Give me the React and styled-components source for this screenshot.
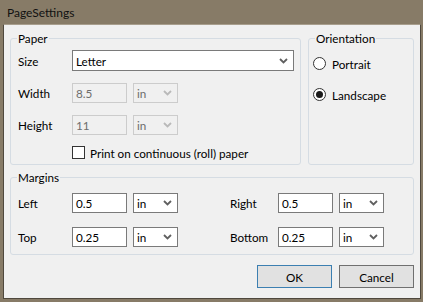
import React from 'react'
import styled, { createGlobalStyle } from 'styled-components'

const GlobalStyle = createGlobalStyle`
  html, body { margin: 0; padding: 0; background: #ffffff; }
  body { font-family: Lato, "Liberation Sans", Arial, sans-serif; font-size: 11.7px; color: #000; }
  * { box-sizing: border-box; }
`

const Window = styled.div`
  width: 423px;
  height: 302px;
  background: #877b67;
  display: flex;
  flex-direction: column;
`

const TitleBar = styled.div`
  height: 24px;
  padding-left: 7px;
  display: flex;
  align-items: center;
  font-size: 12px;
  color: #111;
`

const Body = styled.div`
  flex: 1;
  margin: 0 2px 3px 3px;
  border: 1px solid #4f483d;
  border-top-color: #a89e8d;
  background: #f0f0f0;
  padding: 6px 6px 0 6px;
  display: flex;
  flex-direction: column;
`

const TopRow = styled.div`
  display: flex;
  gap: 7px;
  height: 134px;
`

const Group = styled.fieldset`
  margin: 0;
  width: ${p => p.$w}px;
  height: ${p => p.$h}px;
  border: 1px solid #d5dce3;
  border-radius: 3px;
  padding: ${p => p.$pt}px 0 0 ${p => p.$pl}px;
  min-width: 0;
`

const Legend = styled.legend`
  padding: 0 1px;
  margin-left: ${p => p.$ml || -1}px;
  height: 14px;
  line-height: 14px;
  color: #000;
`

const FormGrid = styled.div`
  display: grid;
  grid-template-columns: ${p => p.$cols};
  grid-auto-rows: 21px;
  column-gap: 6px;
  row-gap: ${p => p.$gap}px;
  align-items: center;
`

const Label = styled.span`
  white-space: nowrap;
  grid-column-start: ${p => p.$col || 'auto'};
`

const TextBox = styled.div`
  height: ${p => p.$h || 20}px;
  border: 1px solid ${p => (p.$disabled ? '#cccccc' : '#7a7a7a')};
  background: ${p => (p.$disabled ? '#f0f0f0' : '#ffffff')};
  color: ${p => (p.$disabled ? '#6d6d6d' : '#000')};
  padding-left: 3px;
  display: flex;
  align-items: center;
  grid-column: span ${p => p.$span || 1};
`

const Combo = styled(TextBox)`
  justify-content: space-between;
  padding-right: 5px;
`

const CheckRow = styled.label`
  grid-column: 2 / span 3;
  align-self: start;
  height: 13px;
  display: flex;
  align-items: center;
  gap: 5px;
  white-space: nowrap;
`

const CheckBox = styled.span`
  width: 13px;
  height: 13px;
  border: 1px solid #333;
  background: #fff;
`

const RadioList = styled.div`
  display: flex;
  flex-direction: column;
  gap: 18px;
`

const RadioRow = styled.label`
  display: flex;
  align-items: center;
  gap: 6px;
  height: 13px;
`

const Radio = styled.span`
  width: 13px;
  height: 13px;
  border-radius: 50%;
  border: 1px solid #333;
  background: #fff;
  display: flex;
  align-items: center;
  justify-content: center;
  &::after {
    content: '';
    width: 7px;
    height: 7px;
    border-radius: 50%;
    background: ${p => (p.$checked ? '#1a1a1a' : 'transparent')};
  }
`

const Buttons = styled.div`
  display: flex;
  justify-content: flex-end;
  gap: 7px;
  margin-top: 10px;
`

const Button = styled.button`
  width: 75px;
  height: 23px;
  font: inherit;
  color: #000;
  background: #e1e1e1;
  border: 1px solid ${p => (p.$default ? '#3c7fb1' : '#707070')};
  padding: 0;
`

function Chevron({ disabled }) {
  return (
    <svg width="9" height="6" viewBox="0 0 9 6">
      <path d="M1 1 L4.5 4.5 L8 1" fill="none" stroke={disabled ? '#b9b9b9' : '#606060'} strokeWidth="1.8" />
    </svg>
  )
}

function Select({ value, span, disabled, h }) {
  return (
    <Combo $span={span} $disabled={disabled} $h={h}>
      <span>{value}</span>
      <Chevron disabled={disabled} />
    </Combo>
  )
}

export default function App() {
  return (
    <>
      <GlobalStyle />
      <Window>
        <TitleBar>PageSettings</TitleBar>
        <Body>
          <TopRow>
            <Group $w={291} $h={134} $pt={5} $pl={7}>
              <Legend>Paper</Legend>
              <FormGrid $gap={11} $cols="48px 55px 45px 110px">
                <Label $col={1}>Size</Label>
                <Select value="Letter" span={3} h={21} />
                <Label $col={1}>Width</Label>
                <TextBox $disabled>8.5</TextBox>
                <Select value="in" disabled />
                <Label $col={1}>Height</Label>
                <TextBox $disabled>11</TextBox>
                <Select value="in" disabled />
                <CheckRow>
                  <CheckBox />
                  Print on continuous (roll) paper
                </CheckRow>
              </FormGrid>
            </Group>
            <Group $w={106} $h={134} $pt={12} $pl={4}>
              <Legend $ml={2}>Orientation</Legend>
              <RadioList>
                <RadioRow>
                  <Radio />
                  Portrait
                </RadioRow>
                <RadioRow>
                  <Radio $checked />
                  Landscape
                </RadioRow>
              </RadioList>
            </Group>
          </TopRow>
          <Group $w={404} $h={85} $pt={8} $pl={7} style={{ marginTop: 5 }}>
            <Legend>Margins</Legend>
            <FormGrid $gap={13} $cols="48px 55px 45px 40px 42px 55px 45px">
              <Label>Left</Label>
              <TextBox>0.5</TextBox>
              <Select value="in" />
              <Label $col={5}>Right</Label>
              <TextBox>0.5</TextBox>
              <Select value="in" />
              <Label $col={1}>Top</Label>
              <TextBox>0.25</TextBox>
              <Select value="in" />
              <Label $col={5}>Bottom</Label>
              <TextBox>0.25</TextBox>
              <Select value="in" />
            </FormGrid>
          </Group>
          <Buttons>
            <Button $default>OK</Button>
            <Button>Cancel</Button>
          </Buttons>
        </Body>
      </Window>
    </>
  )
}
